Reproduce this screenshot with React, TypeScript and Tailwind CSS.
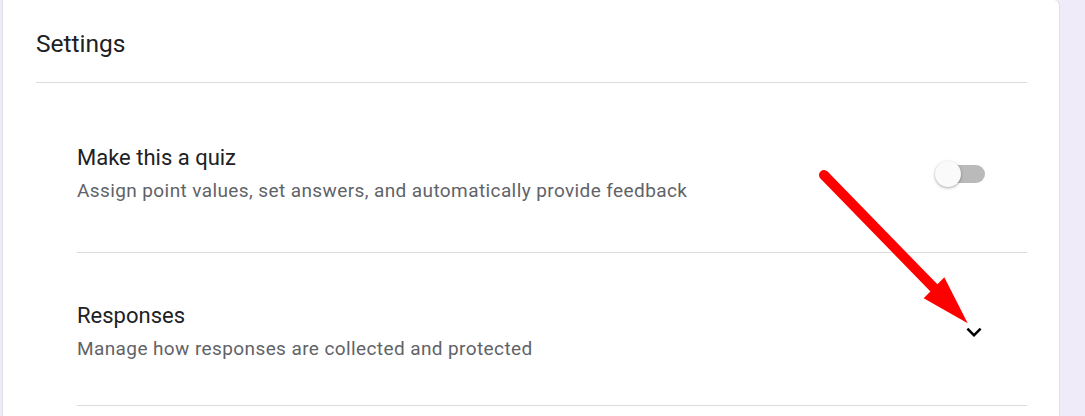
import React from 'react'

const FONT = { fontFamily: 'Roboto, "Liberation Sans", Arial, sans-serif' }

function Toggle() {
  return (
    <div className="relative w-[50px] h-[26px] flex items-center flex-none">
      <div className="absolute left-[7px] right-0 h-[18px] rounded-full bg-[#bababa]" />
      <div className="relative w-[26px] h-[26px] rounded-full bg-[#fafafa] shadow-[0_1px_3px_rgba(0,0,0,0.35)]" />
    </div>
  )
}

function ExpandMore() {
  return (
    <svg width="30" height="30" viewBox="0 0 24 24" className="flex-none">
      <path d="M16.59 8.59L12 13.17 7.41 8.59 6 10l6 6 6-6z" fill="#000" />
    </svg>
  )
}

interface RowProps {
  title: string
  subtitle: string
  control: React.ReactNode
  className: string
}

function SettingRow({ title, subtitle, control, className }: RowProps) {
  return (
    <div className={`flex items-center border-b border-[#dadce0] ${className}`}>
      <div className="flex-1 flex flex-col gap-[7px]">
        <span className="text-[22px] leading-[28px] text-[#202124]">{title}</span>
        <span className="text-[19px] leading-[24px] text-[#5f6368] tracking-[0.4px]">{subtitle}</span>
      </div>
      {control}
    </div>
  )
}

export default function App() {
  return (
    <div className="w-[1085px] h-[416px] bg-[#f0ebf8] overflow-hidden" style={FONT}>
      <div className="relative ml-[2px] w-[1058px] h-full bg-white border-x border-[#e0dde6] rounded-tr-[6px]">
        {/* header */}
        <div className="ml-[33px] mr-[32px] pt-[28px] pb-[22px] border-b border-[#dadce0]">
          <span className="block text-[24.5px] leading-[32px] text-[#202124]">Settings</span>
        </div>

        <div className="ml-[74px] mr-[32px]">
          <SettingRow
            title="Make this a quiz"
            subtitle="Assign point values, set answers, and automatically provide feedback"
            control={<div className="pr-[42px]"><Toggle /></div>}
            className="pt-[61px] pb-[49px]"
          />
          <SettingRow
            title="Responses"
            subtitle="Manage how responses are collected and protected"
            control={<div className="pr-[38px]"><ExpandMore /></div>}
            className="pt-[49px] pb-[44px]"
          />
        </div>

        {/* red annotation arrow */}
        <svg className="absolute left-[-2px] top-0 pointer-events-none" width="1085" height="416">
          <line x1="823" y1="175" x2="934" y2="289" stroke="#ff0000" strokeWidth="10" strokeLinecap="round" />
          <polygon points="922.7,298.3 943.3,277.3 966.7,323.3" fill="#ff0000" />
        </svg>
      </div>
    </div>
  )
}
